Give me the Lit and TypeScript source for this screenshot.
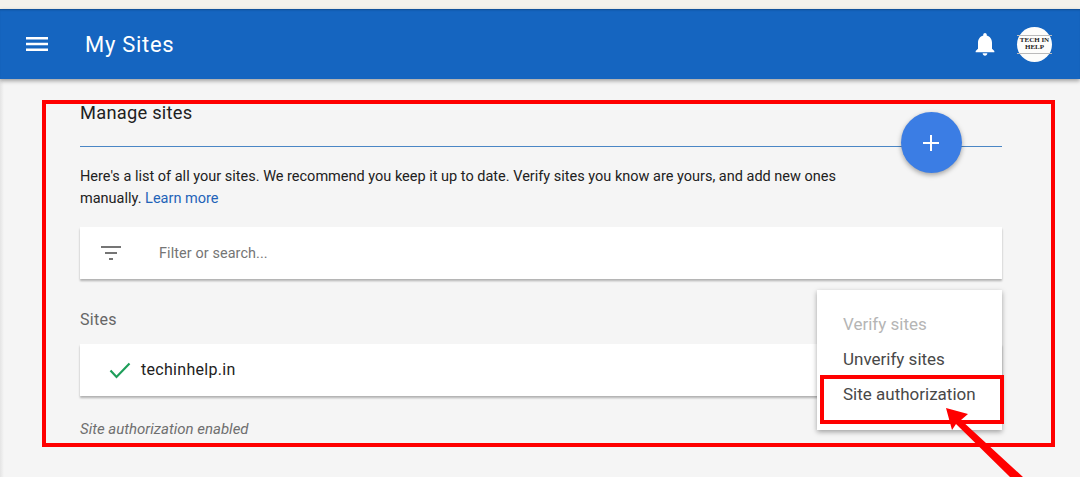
import { LitElement, html, css } from 'lit';
import { customElement } from 'lit/decorators.js';

@customElement('app-root')
export class AppRoot extends LitElement {
  static styles = css`
    :host {
      display: block;
      position: relative;
      width: 1080px;
      height: 477px;
      overflow: hidden;
      background: linear-gradient(to right, #e4e4e4, #f5f5f5 4px);
      font-family: Roboto, 'Liberation Sans', sans-serif;
      color: #212121;
    }

    .strip {
      height: 9px;
      background: #f4f2ec;
    }

    /* ===== Header ===== */
    .header {
      display: flex;
      align-items: center;
      height: 70px;
      padding: 0 28px 0 25px;
      background: #1565c0;
      color: #fff;
      box-shadow: 0 2px 4px rgba(0, 0, 0, 0.35), inset 0 2px 2px -1px rgba(0, 0, 0, 0.25);
    }
    .menu-icon {
      width: 24px;
      height: 24px;
      margin-right: 36px;
    }
    .title {
      flex: 1;
      font-size: 22px;
      letter-spacing: 0.7px;
    }
    .bell {
      width: 28px;
      height: 28px;
      margin-right: 18px;
    }
    .avatar {
      display: flex;
      align-items: center;
      justify-content: center;
      width: 35px;
      height: 35px;
      border-radius: 50%;
      background: #fdfdfb;
      color: #222;
      font-family: 'Liberation Serif', serif;
      font-size: 7px;
      font-weight: 700;
      line-height: 7.500px;
    }
    .avatar-text {
      padding: 1px 3px;
      text-align: center;
      white-space: nowrap;
      border-top: 1px solid #bbb;
      border-bottom: 1px solid #bbb;
    }

    /* ===== Content ===== */
    .content {
      width: 922px;
      margin-left: 80px;
      padding-top: 23px;
    }
    .heading {
      font-size: 18.300px;
      line-height: 22px;
      padding-bottom: 22px;
      border-bottom: 1px solid #4a86c5;
      letter-spacing: 0.25px;
    }
    .intro {
      margin: 19px 0 17px;
      width: 790px;
      font-size: 14.500px;
      line-height: 22px;
      color: #212121;
    }
    .intro a {
      color: #1f63b8;
      text-decoration: none;
    }
    .card {
      display: flex;
      align-items: center;
      background: #fff;
      height: 52px;
      box-shadow: 0 2px 2px rgba(0, 0, 0, 0.28);
    }
    .filter-icon {
      width: 24px;
      height: 24px;
      margin: 0 36px 0 19px;
    }
    .placeholder {
      font-size: 14.400px;
      color: #757575;
      letter-spacing: 0.1px;
    }
    .section {
      margin: 30px 0 13px;
      font-size: 16px;
      line-height: 22px;
      color: #666;
      letter-spacing: 0.3px;
    }
    .check {
      width: 24px;
      height: 24px;
      margin: 0 9px 0 28px;
    }
    .site {
      font-size: 16px;
      letter-spacing: 0.3px;
      padding-bottom: 2px;
    }
    .note {
      margin-top: 24px;
      font-size: 15px;
      line-height: 18px;
      font-style: italic;
      color: #6f6f6f;
    }

    /* ===== Overlays ===== */
    .fab {
      position: absolute;
      left: 901px;
      top: 112px;
      display: flex;
      align-items: center;
      justify-content: center;
      width: 61px;
      height: 61px;
      border-radius: 50%;
      background: #3b7de4;
      box-shadow: 0 2px 5px rgba(0, 0, 0, 0.35);
    }
    .fab svg {
      width: 18px;
      height: 18px;
      margin-left: -1px;
    }
    .menu {
      position: absolute;
      left: 817px;
      top: 290px;
      box-sizing: border-box;
      width: 185px;
      height: 140px;
      padding: 17px 0 0 26px;
      background: #fff;
      box-shadow: 0 2px 5px rgba(0, 0, 0, 0.35);
      font-size: 17px;
      line-height: 35px;
      color: #484848;
    }
    .menu .off {
      color: #b5b5b5;
    }
    .frame {
      position: absolute;
      box-sizing: border-box;
      border: 4px solid #f00;
    }
    .frame-main {
      left: 42px;
      top: 100px;
      width: 1013px;
      height: 347px;
    }
    .frame-item {
      left: 820px;
      top: 375px;
      width: 184px;
      height: 49px;
    }
    .arrow {
      position: absolute;
      left: 930px;
      top: 400px;
      width: 110px;
      height: 77px;
    }
  `;

  render() {
    return html`
      <div class="strip"></div>
      <header class="header">
        <svg class="menu-icon" viewBox="0 0 24 24" fill="#fff">
          <path d="M1 5h22v2.600H1zM1 10.700h22v2.600H1zM1 16.400h22V19H1z"></path>
        </svg>
        <div class="title">My Sites</div>
        <svg class="bell" viewBox="0 0 24 24" fill="#fff">
          <path d="M12 22c1.100 0 2-.9 2-2h-4c0 1.100.9 2 2 2zm6-6v-5c0-3.100-1.600-5.600-4.500-6.300V4c0-.8-.7-1.500-1.500-1.500s-1.500.7-1.500 1.500v.7C7.600 5.400 6 7.900 6 11v5l-2 2v1h16v-1l-2-2z"></path>
        </svg>
        <div class="avatar"><div class="avatar-text">TECH IN<br />HELP</div></div>
      </header>

      <main class="content">
        <div class="heading">Manage sites</div>
        <p class="intro">
          Here's a list of all your sites. We recommend you keep it up to date. Verify sites you know are yours, and add new ones manually.
          <a href="#">Learn more</a>
        </p>
        <div class="card">
          <svg class="filter-icon" viewBox="0 0 24 24" fill="#757575">
            <path d="M2 5h20v2H2zM6 11h12v2H6zM10 17h4v2h-4z"></path>
          </svg>
          <span class="placeholder">Filter or search...</span>
        </div>
        <div class="section">Sites</div>
        <div class="card">
          <svg class="check" viewBox="0 0 24 24" fill="none" stroke="#1e9e5a" stroke-width="2.200">
            <path d="M2.500 12.500l6 6.500L21.500 5.500"></path>
          </svg>
          <span class="site">techinhelp.in</span>
        </div>
        <div class="note">Site authorization enabled</div>
      </main>

      <div class="fab">
        <svg viewBox="0 0 18 18" fill="#fff"><path d="M8 1h2v7h7v2h-7v7H8v-7H1V8h7z"></path></svg>
      </div>
      <div class="menu">
        <div class="off">Verify sites</div>
        <div>Unverify sites</div>
        <div>Site authorization</div>
      </div>

      <div class="frame frame-main"></div>
      <div class="frame frame-item"></div>
      <svg class="arrow" viewBox="0 0 110 77" fill="#f00">
        <path d="M16 8L38 14L31 20L93 77H80L26 24L22 30z"></path>
      </svg>
    `;
  }
}
